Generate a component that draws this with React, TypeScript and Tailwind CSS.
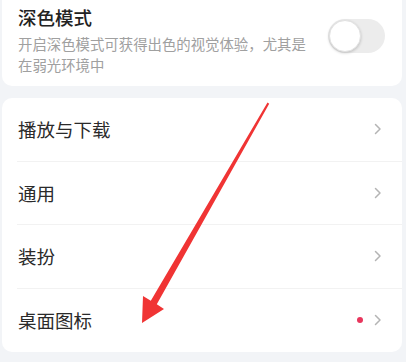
import { FC } from "react"

const font = { fontFamily: '"Noto Sans CJK SC", "Noto Sans", sans-serif' }

const Chevron: FC = () => (
  <svg width="8" height="12" viewBox="0 0 8 12" className="shrink-0">
    <path d="M1.5 1.5 L6 6 L1.5 10.5" fill="none" stroke="#b4b4b4" strokeWidth="1.5" strokeLinecap="round" strokeLinejoin="round" />
  </svg>
)

const rows = [
  { label: "播放与下载", dot: false },
  { label: "通用", dot: false },
  { label: "装扮", dot: false },
  { label: "桌面图标", dot: true }
]

const App: FC = () => {
  return (
    <div className="relative h-[362px] w-[406px] overflow-hidden bg-[#f2f4f7]" style={font}>
      {/* Dark mode card */}
      <div className="ml-[2px] w-[400px] rounded-b-[10px] bg-white pl-[16px] pr-[17px] pt-[5px] pb-[11px]">
        <div className="flex items-center justify-between">
          <div className="flex flex-col">
            <div className="text-[18.5px] leading-[24px] font-medium text-[#222]">深色模式</div>
            <div className="mt-[5px] w-[295px] text-[14.4px] leading-[20.5px] text-[#a0a0a0]">
              开启深色模式可获得出色的视觉体验，尤其是在弱光环境中
            </div>
          </div>
          <div className="mt-[-8px] flex h-[34px] w-[57px] items-center rounded-full bg-[#ececec] p-[1px]">
            <div className="h-[32px] w-[32px] rounded-full border border-[#e2e2e2] bg-white shadow-[0_1px_3px_rgba(0,0,0,0.2)]" />
          </div>
        </div>
      </div>

      {/* Settings list */}
      <div className="ml-[2px] mt-[12px] w-[400px] rounded-[10px] bg-white">
        {rows.map((row, i) => (
          <div
            key={row.label}
            className={`ml-[15px] flex h-[63.5px] items-center justify-between pl-[1px] pr-[20px] ${
              i < rows.length - 1 ? "border-b border-[#f2f2f2]" : ""
            }`}
          >
            <span className="text-[18.5px] leading-[24px] text-[#2a2a2a]">{row.label}</span>
            <div className="flex items-center gap-[11px]">
              {row.dot && <span className="h-[6px] w-[6px] rounded-full bg-[#e8365d]" />}
              <Chevron />
            </div>
          </div>
        ))}
      </div>

      {/* Red annotation arrow */}
      <svg className="pointer-events-none absolute left-0 top-0" width="406" height="362" viewBox="0 0 406 362">
        <polygon
          points="267.5,102.5 269.2,103.8 156.8,304.2 164,309 142,323 143,296 150.8,300.8"
          fill="#f03434"
        />
      </svg>
    </div>
  )
}

export default App
